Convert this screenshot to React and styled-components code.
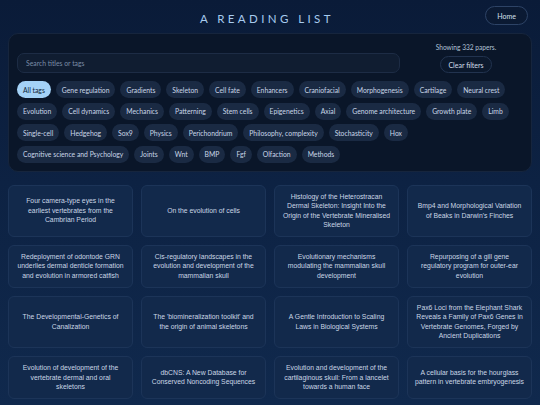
import React from "react";
import styled, { createGlobalStyle } from "styled-components";

const GlobalStyle = createGlobalStyle`
  html, body {
    margin: 0;
    padding: 0;
  }
  body {
    min-height: 100vh;
    background: linear-gradient(180deg, #0a1b38 0%, #0d2243 45%, #10294d 100%);
    background-attachment: fixed;
    color: #c8d5e6;
    font-family: "Trebuchet MS", Lato, "DejaVu Sans", sans-serif;
  }
`;

const Page = styled.div`
  padding: 0 8px 16px;
`;

const Header = styled.header`
  display: grid;
  grid-template-columns: 1fr auto 1fr;
  align-items: center;
  height: 33px;
`;

const Title = styled.h1`
  grid-column: 2;
  margin: 4px 6px 0 0;
  font-size: 11.5px;
  font-weight: 400;
  letter-spacing: 3.4px;
  color: #a7cbee;
`;

const HomeButton = styled.button`
  grid-column: 3;
  justify-self: end;
  margin-right: 4px;
  margin-top: -2px;
  height: 19px;
  padding: 0 11px;
  border-radius: 10px;
  border: 1px solid #2d4366;
  background: #0b1a33;
  color: #d6e1ee;
  font-family: inherit;
  font-size: 7px;
`;

const Panel = styled.section`
  background: #0a1629;
  border: 1px solid #16253d;
  border-radius: 10px;
  padding: 9px 19px 8px 8px;
`;

const TopRow = styled.div`
  display: flex;
  align-items: flex-end;
  gap: 16px;
`;

const Search = styled.input`
  flex: 1;
  height: 20px;
  box-sizing: border-box;
  padding: 0 8px;
  border-radius: 7px;
  border: 1px solid #1d2c45;
  background: #101d31;
  color: #c8d5e6;
  font-family: inherit;
  font-size: 6.8px;
  &::placeholder {
    color: #7a8ca5;
  }
`;

const Side = styled.div`
  width: 100px;
  display: flex;
  flex-direction: column;
  align-items: center;
  gap: 5px;
  margin-right: -4px;
`;

const Count = styled.div`
  font-size: 6.6px;
  color: #b3c3d8;
`;

const ClearButton = styled.button`
  height: 17px;
  box-sizing: border-box;
  padding: 0 7px;
  border-radius: 9px;
  border: 1px solid #22334f;
  background: #0b182c;
  color: #d3deeb;
  font-family: inherit;
  font-size: 7px;
`;

const Tags = styled.div`
  display: flex;
  flex-wrap: wrap;
  gap: 4.5px 5px;
  margin-top: 8px;
`;

const Tag = styled.button`
  height: 17px;
  padding: 0 6px;
  border-radius: 9px;
  border: none;
  background: ${(p) => (p.$active ? "#a4d2f7" : "#1a2a43")};
  color: ${(p) => (p.$active ? "#0c1c35" : "#c9d6e7")};
  font-family: inherit;
  font-size: 6.8px;
  white-space: nowrap;
`;

const Grid = styled.div`
  display: grid;
  grid-template-columns: repeat(4, 1fr);
  gap: 8px;
  margin-top: 13px;
`;

const Card = styled.article`
  display: flex;
  align-items: center;
  justify-content: center;
  padding: 6px 6.5px;
  border-radius: 6px;
  border: 1px solid #1c3458;
  background: #12294b;
  color: #cbd7e6;
  font-family: "Liberation Sans", Arial, sans-serif;
  font-size: 6.82px;
  line-height: 9.6px;
  text-align: center;
`;

const tags = [
  "All tags", "Gene regulation", "Gradients", "Skeleton", "Cell fate", "Enhancers",
  "Craniofacial", "Morphogenesis", "Cartilage", "Neural crest", "Evolution",
  "Cell dynamics", "Mechanics", "Patterning", "Stem cells", "Epigenetics", "Axial",
  "Genome architecture", "Growth plate", "Limb", "Single-cell", "Hedgehog", "Sox9",
  "Physics", "Perichondrium", "Philosophy, complexity", "Stochasticity", "Hox",
  "Cognitive science and Psychology", "Joints", "Wnt", "BMP", "Fgf", "Olfaction", "Methods",
];

const papers = [
  "Four camera-type eyes in the earliest vertebrates from the Cambrian Period",
  "On the evolution of cells",
  "Histology of the Heterostracan Dermal Skeleton: Insight Into the Origin of the Vertebrate Mineralised Skeleton",
  "Bmp4 and Morphological Variation of Beaks in Darwin's Finches",
  "Redeployment of odontode GRN underlies dermal denticle formation and evolution in armored catfish",
  "Cis-regulatory landscapes in the evolution and development of the mammalian skull",
  "Evolutionary mechanisms modulating the mammalian skull development",
  "Repurposing of a gill gene regulatory program for outer-ear evolution",
  "The Developmental-Genetics of Canalization",
  "The 'biomineralization toolkit' and the origin of animal skeletons",
  "A Gentle Introduction to Scaling Laws in Biological Systems",
  "Pax6 Loci from the Elephant Shark Reveals a Family of Pax6 Genes in Vertebrate Genomes, Forged by Ancient Duplications",
  "Evolution of development of the vertebrate dermal and oral skeletons",
  "dbCNS: A New Database for Conserved Noncoding Sequences",
  "Evolution and development of the cartilaginous skull: From a lancelet towards a human face",
  "A cellular basis for the hourglass pattern in vertebrate embryogenesis",
];

export default function App() {
  return (
    <>
      <GlobalStyle />
      <Page>
        <Header>
          <Title>A READING LIST</Title>
          <HomeButton>Home</HomeButton>
        </Header>
        <Panel>
          <TopRow>
            <Search placeholder="Search titles or tags" />
            <Side>
              <Count>Showing 332 papers.</Count>
              <ClearButton>Clear filters</ClearButton>
            </Side>
          </TopRow>
          <Tags>
            {tags.map((t, i) => (
              <Tag key={t} $active={i === 0}>{t}</Tag>
            ))}
          </Tags>
        </Panel>
        <Grid>
          {papers.map((p) => (
            <Card key={p}>{p}</Card>
          ))}
        </Grid>
      </Page>
    </>
  );
}
